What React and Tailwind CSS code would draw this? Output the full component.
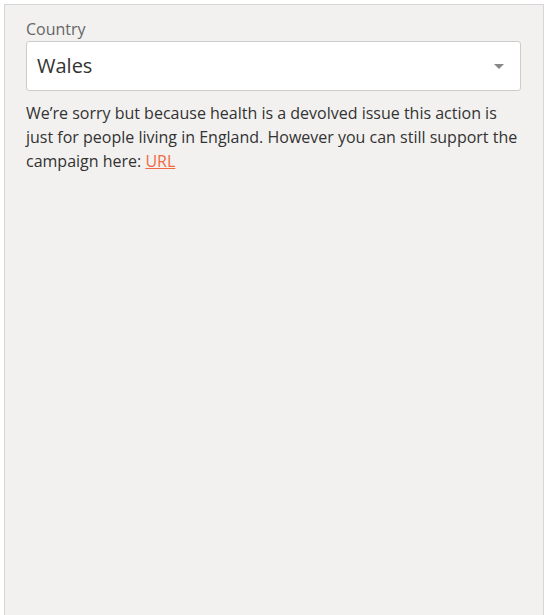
export default function App() {
  return (
    <div className="bg-white min-h-screen pt-1 pl-1 pr-[6px]" style={{ fontFamily: '"Open Sans", sans-serif' }}>
      <div className="bg-[#f2f1ef] border border-b-0 border-[#d6d6d6] h-[611px] pl-[21px] pr-[22px] pt-[13px]">
        <label className="block text-[16px] leading-[22px] text-[#666]">Country</label>
        <div className="mt-[1px] h-[50px] bg-white border border-[#ccc] rounded-[3px] flex items-center justify-between pl-[10px] pr-[16px]">
          <span className="text-[20px] text-[#333]">Wales</span>
          <svg width="10" height="5" viewBox="0 0 10 5">
            <path d="M0 0h10L5 5z" fill="#888" />
          </svg>
        </div>
        <p className="mt-[10px] text-[16px] leading-[24px] text-[#333]">
          We’re sorry but because health is a devolved issue this action is just for people living in England. However you can still support the campaign here:{" "}
          <a href="#" className="text-[#ef6a45] underline">URL</a>
        </p>
      </div>
    </div>
  )
}
